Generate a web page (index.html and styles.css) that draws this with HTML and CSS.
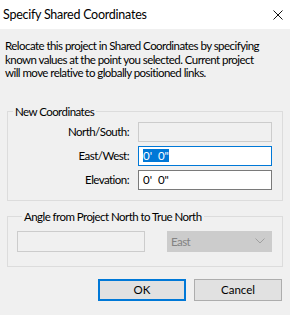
FILE: index.html
```html
<!DOCTYPE html>
<html lang="en">
<head>
    <link rel="stylesheet" href="styles.css">
</head>
<body>
    <div class="dialog">
        <div class="titlebar">
            <span class="title">Specify Shared Coordinates</span>
            <svg class="close" width="10" height="10" viewBox="0 0 10 10">
                <path d="M0.5 0.5 L9.5 9.5 M9.5 0.5 L0.5 9.5" stroke="#111" stroke-width="1"/>
            </svg>
        </div>
        <div class="body">
            <p class="desc">Relocate this project in Shared Coordinates by specifying<br>
                known values at the point you selected. Current project<br>
                will move relative to globally positioned links.</p>

            <fieldset class="group coords">
                <legend>New Coordinates</legend>
                <label>North/South:</label>
                <div class="field disabled"></div>
                <label>East/West:</label>
                <div class="field focused"><span class="sel">0'&nbsp;&nbsp;0"</span></div>
                <label>Elevation:</label>
                <div class="field">0'&nbsp;&nbsp;0"</div>
            </fieldset>

            <fieldset class="group angle">
                <legend>Angle from Project North to True North</legend>
                <div class="field disabled wide"></div>
                <div class="combo">
                    <span>East</span>
                    <svg width="10" height="6" viewBox="0 0 10 6">
                        <path d="M0.5 0.5 L5 5 L9.5 0.5" fill="none" stroke="#a0a0a0" stroke-width="1"/>
                    </svg>
                </div>
            </fieldset>

            <div class="buttons">
                <button class="btn default">OK</button>
                <button class="btn">Cancel</button>
            </div>
        </div>
    </div>
</body>
</html>
```
FILE: styles.css
```css
body {
    margin: 0;
    font-family: Lato, sans-serif;
    font-size: 11.5px;
    letter-spacing: -0.55px;
    color: #000;
    background-color: #f0f0f0;
}
.dialog {
    width: 290px;
    height: 315px;
    background-color: #f0f0f0;
}
.titlebar {
    height: 29px;
    background-color: #fff;
    display: flex;
    align-items: center;
    justify-content: space-between;
    padding: 0 7px 0 3px;
}
.title {
    font-size: 12.5px;
    letter-spacing: -0.25px;
}
.close {
    display: block;
}
.body {
    padding: 10px 7px 0 7px;
}
.desc {
    margin: 0 0 0 -2px;
    line-height: 13.5px;
    white-space: nowrap;
}
.group {
    margin: 0;
    border: 1px solid #dcdcdc;
    padding: 0;
}
.group legend {
    padding: 0 2px;
    margin-left: 5px;
    line-height: 14px;
}
.coords {
    margin-top: 25px;
    display: grid;
    grid-template-columns: 1fr 134px;
    column-gap: 9px;
    row-gap: 4px;
    padding: 3px 10px 10px 0;
}
.coords label {
    text-align: right;
    line-height: 20px;
}
.field {
    height: 20px;
    box-sizing: border-box;
    border: 1px solid #7a7a7a;
    background-color: #fff;
    padding: 0 4px;
    line-height: 18px;
    letter-spacing: 0;
}
.field.disabled {
    background-color: #f0f0f0;
    border-color: #cccccc;
}
.field.focused {
    border-color: #0078d7;
}
.sel {
    background-color: #0078d7;
    color: #fff;
}
.angle {
    margin-top: 9px;
    display: flex;
    justify-content: space-between;
    padding: 7px 10px 14px 9px;
}
.field.wide {
    width: 128px;
    height: 21px;
}
.combo {
    width: 105px;
    height: 21px;
    box-sizing: border-box;
    background-color: #cccccc;
    border: 1px solid #cccccc;
    color: #838383;
    display: flex;
    align-items: center;
    justify-content: space-between;
    padding: 0 6px 0 3px;
}
.buttons {
    display: flex;
    justify-content: flex-end;
    gap: 8px;
    margin-top: 12px;
    margin-right: 1px;
}
.btn {
    width: 88px;
    height: 22px;
    font-family: Lato, sans-serif;
    font-size: 11.5px;
    background-color: #e1e1e1;
    border: 1px solid #adadad;
    padding: 0;
    color: #000;
}
.btn.default {
    border: 2px solid #0078d7;
}
```
